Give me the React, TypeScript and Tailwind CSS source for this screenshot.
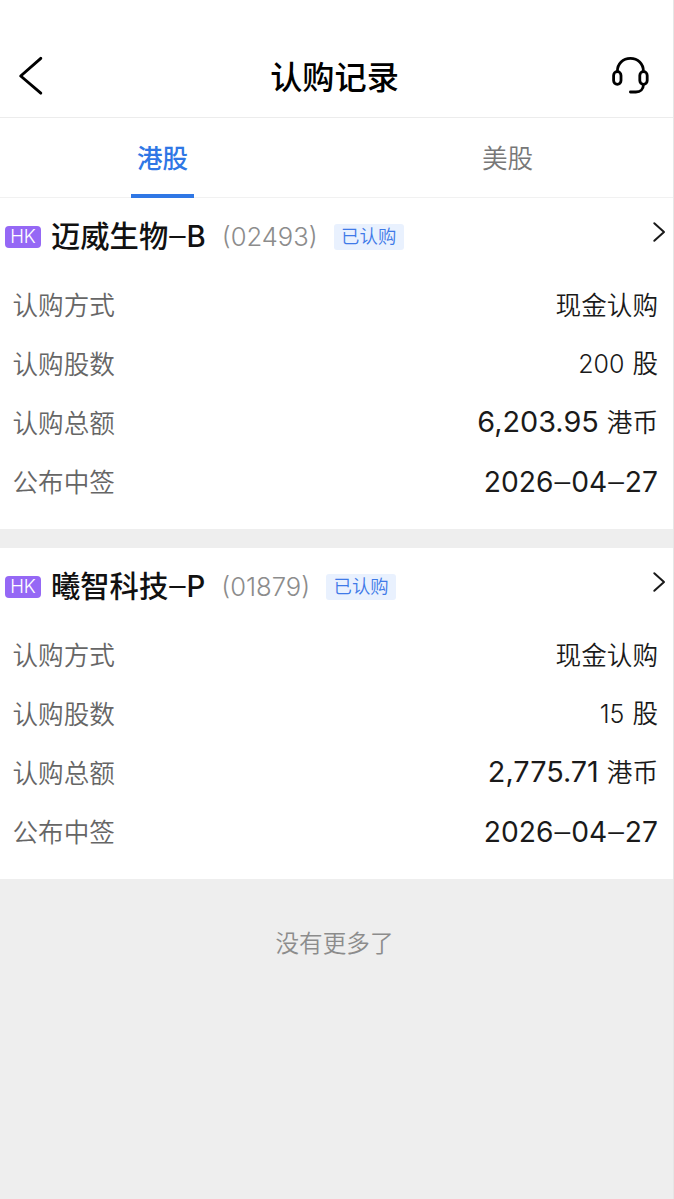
import { Fragment, type ReactNode } from "react";

interface Subscription {
  name: string;
  board: string;
  code: string;
  status: string;
  method: string;
  shares: string;
  amount: string;
  date: string[];
}

const subscriptions: Subscription[] = [
  {
    name: "迈威生物",
    board: "B",
    code: "02493",
    status: "已认购",
    method: "现金认购",
    shares: "200",
    amount: "6,203.95",
    date: ["2026", "04", "27"],
  },
  {
    name: "曦智科技",
    board: "P",
    code: "01879",
    status: "已认购",
    method: "现金认购",
    shares: "15",
    amount: "2,775.71",
    date: ["2026", "04", "27"],
  },
];

function BackIcon() {
  return (
    <svg className="h-[40px] w-[26px]" viewBox="0 0 26 40" fill="none" stroke="#000" strokeWidth="2.9" strokeLinecap="round" strokeLinejoin="round">
      <path d="M22.8 2.3 2.7 20 22.8 37.1" />
    </svg>
  );
}

function HeadsetIcon() {
  return (
    <svg className="h-[38px] w-[38px]" viewBox="0 0 38 38" fill="none" stroke="#000" strokeWidth="2.8" strokeLinecap="round">
      <path d="M6.4 14.2C6.4 6.7 11.9 1.4 19.4 1.4S32.4 6.7 32.4 14.2" />
      <rect x="2.6" y="14.7" width="7.4" height="12.6" rx="3.7" />
      <rect x="28.8" y="14.7" width="7.4" height="12.6" rx="3.7" />
      <path d="M32.4 27.7c0 4.5-3 7.3-7.5 7.3H19.4" />
    </svg>
  );
}

function ArrowIcon() {
  return (
    <svg className="mb-[9px] ml-auto h-[22px] w-[14px]" viewBox="0 0 14 22" fill="none" stroke="#1a1a1a" strokeWidth="2" strokeLinecap="round" strokeLinejoin="round">
      <path d="M2.3 2.2 12 11 2.3 19.8" />
    </svg>
  );
}

// Inter's dash is too short for dates and board suffixes
function Dash() {
  return <span className="mx-px align-[1.5px] font-['Liberation_Sans',sans-serif]">–</span>;
}

function Row({ label, children }: { label: string; children: ReactNode }) {
  return (
    <div className="flex h-[59px] items-center justify-between pl-[12.5px] pr-[15px] text-[25.6px]">
      <span className="pt-[3px] font-[350] text-[#666]">{label}</span>
      <span className="flex items-baseline font-[350] text-[#1a1a1a]">{children}</span>
    </div>
  );
}

function SubscriptionCard({ item }: { item: Subscription }) {
  return (
    <section className="bg-white pb-[18px]">
      <div className="flex h-[77px] items-center pl-[5px] pr-[7px]">
        <span className="flex h-[22px] w-9 items-center justify-center rounded-[4px] bg-[#9568f5] text-[18.5px] font-light text-white">
          HK
        </span>
        <h2 className="mb-0.5 ml-[10px] text-[29.3px] font-medium text-[#111]">
          {item.name}
          <Dash />
          {item.board}
        </h2>
        <span className="ml-4 text-[25.6px] font-light text-[#8c8c8c]">({item.code})</span>
        <span className="ml-4 flex h-[26px] w-[70px] items-center justify-center rounded-[3px] bg-[#e9f1fe] pb-px text-[18.4px] font-[350] text-[#3f7ae8]">
          {item.status}
        </span>
        <ArrowIcon />
      </div>
      <Row label="认购方式">
        <span className="pt-[3px]">{item.method}</span>
      </Row>
      <Row label="认购股数">
        <span className="mr-2 text-[25px]">{item.shares}</span>股
      </Row>
      <Row label="认购总额">
        <span className="mr-2 text-[28.8px] font-[380]">{item.amount}</span>港币
      </Row>
      <Row label="公布中签">
        <span className="pb-0.5 text-[28.2px] font-[380]">
          {item.date.map((part, index) => (
            <Fragment key={index}>
              {index > 0 && <Dash />}
              {part}
            </Fragment>
          ))}
        </span>
      </Row>
    </section>
  );
}

export default function App() {
  return (
    <div
      lang="zh-CN"
      className="flex h-[1199px] w-[674px] flex-col overflow-hidden border-r border-[#e6e6e6] bg-[#eee] font-['Inter','Noto_Sans_CJK_SC',sans-serif] leading-none"
    >
      {/* Title bar */}
      <header className="grid h-[118px] grid-cols-[1fr_auto_1fr] items-center border-b border-[#ececec] bg-white pl-[18px] pr-6 pt-[34px]">
        <BackIcon />
        <h1 className="pl-0.5 pt-1.5 text-[32.2px] font-medium text-black">认购记录</h1>
        <div className="flex justify-end">
          <HeadsetIcon />
        </div>
      </header>

      {/* Market tabs */}
      <nav className="flex h-20 justify-between border-b border-[#f1f1f1] bg-white pl-[131px] pr-[134px] text-[25.6px]">
        <button className="flex h-20 w-[63px] items-center justify-center border-b-4 border-[#2f77e5] pt-1.5 font-medium text-[#2f77e5]">
          港股
        </button>
        <button className="flex w-[63px] items-center justify-center pt-[3px] font-[350] text-[#777]">美股</button>
      </nav>

      <main className="flex flex-col gap-[19px]">
        {subscriptions.map((item) => (
          <SubscriptionCard key={item.code} item={item} />
        ))}
      </main>

      <p className="pr-1 pt-[53px] text-center text-[23.6px] font-[350] text-[#8c8c8c]">没有更多了</p>
    </div>
  );
}
